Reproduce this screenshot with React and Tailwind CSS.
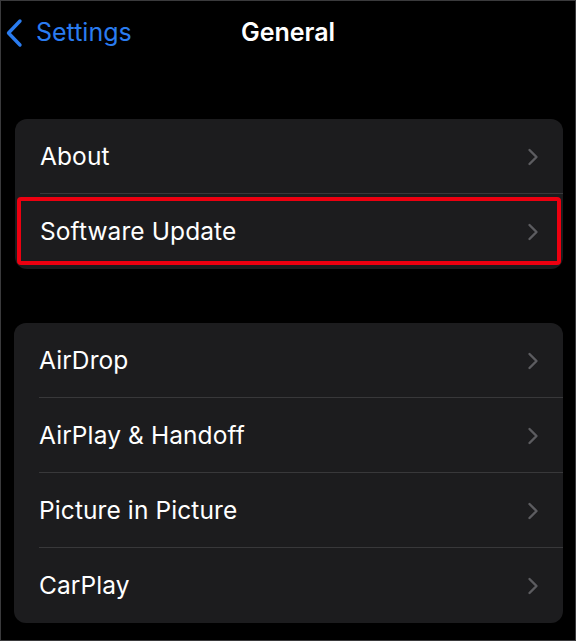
import React from "react";

const Chevron = () => (
  <svg width="12" height="18" viewBox="0 0 12 18" fill="none" className="shrink-0">
    <path d="M2.5 2L9.5 9L2.5 16" stroke="#5c5c60" strokeWidth="2.4" strokeLinecap="round" strokeLinejoin="round" />
  </svg>
);

const Row = ({ label, last, highlight }) => (
  <div className="relative h-[75px] flex items-center pl-[25px]">
    <div className="flex-1 flex items-center pr-[24px] h-full">
      <span className="flex-1 text-[24.5px] text-white tracking-[0.1px]">{label}</span>
      <Chevron />
    </div>
    {!last && <div className="absolute left-[25px] right-0 bottom-0 h-px bg-[#38383a]" />}
    {highlight && (
      <div className="absolute left-[2px] right-[2px] top-[3px] bottom-[4px] border-[4px] border-[#ec0010] rounded-[4px]" />
    )}
  </div>
);

export default function App() {
  return (
    <div
      className="w-[576px] h-[641px] bg-black border border-[#3a3a3c] box-border overflow-hidden"
      style={{ fontFamily: "Inter, 'Noto Sans', sans-serif" }}
    >
      <div className="grid grid-cols-[1fr_auto_1fr] items-center h-[63px]">
        <div className="flex items-center pl-[3px] gap-[12px]">
          <svg width="20" height="30" viewBox="0 0 20 30" fill="none">
            <path d="M16 3L4.5 15L16 27" stroke="#2a7cf0" strokeWidth="3.4" strokeLinecap="round" strokeLinejoin="round" />
          </svg>
          <span className="text-[25px] text-[#2a7cf0]">Settings</span>
        </div>
        <div className="text-[25px] font-semibold text-white">General</div>
        <div />
      </div>

      <div className="ml-[14px] w-[548px] mt-[55px] bg-[#1c1c1e] rounded-[12px]">
        <Row label="About" />
        <Row label="Software Update" last highlight />
      </div>

      <div className="ml-[13px] w-[549px] mt-[54px] bg-[#1c1c1e] rounded-[12px]">
        <Row label="AirDrop" />
        <Row label="AirPlay & Handoff" />
        <Row label="Picture in Picture" />
        <Row label="CarPlay" last />
      </div>
    </div>
  );
}
